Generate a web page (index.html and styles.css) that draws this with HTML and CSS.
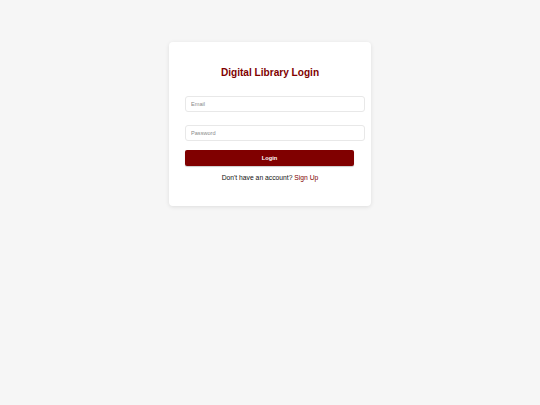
FILE: index.html
```html
<!DOCTYPE html>
<html>
<head>
<meta charset="utf-8">
<link rel="stylesheet" href="styles.css">
</head>
<body>
<div class="page">
  <div class="card">
    <h2 class="title">Digital Library Login</h2>
    <form class="form">
      <input class="field field-email" type="email" placeholder="Email">
      <input class="field field-pass" type="password" placeholder="Password">
      <button class="btn" type="button">Login</button>
    </form>
    <p class="signup">Don't have an account? <a class="link" href="#">Sign Up</a></p>
  </div>
</div>
</body>
</html>
```
FILE: styles.css
```css
html, body {
  margin: 0;
  padding: 0;
}
body {
  background: #f6f6f6;
  font-family: "Liberation Sans", Arial, sans-serif;
  width: 540px;
  height: 405px;
  overflow: hidden;
}
.page {
  display: flex;
  justify-content: center;
  padding-top: 42px;
}
.card {
  width: 202px;
  height: 164px;
  box-sizing: border-box;
  background: #fff;
  border-radius: 4px;
  box-shadow: 0 1px 4px rgba(0, 0, 0, 0.1);
  padding: 17px 16px 0 16px;
}
.title {
  margin: 8px 0 0 0;
  font-size: 10.1px;
  line-height: 12px;
  font-weight: bold;
  color: #800000;
  text-align: center;
}
.form {
  display: flex;
  flex-direction: column;
  margin-top: 17px;
}
.field {
  width: 180px;
  height: 16px;
  box-sizing: border-box;
  border: 1px solid #e8e8e8;
  border-radius: 3px;
  padding: 0 5px;
  font-family: "Liberation Sans", Arial, sans-serif;
  font-size: 5.6px;
  color: #333;
  background: #fff;
  outline: none;
}
.field::placeholder {
  color: #8a8a8a;
}
.field-pass {
  margin-top: 13px;
}
.btn {
  margin-top: 9px;
  width: 169px;
  height: 16px;
  box-sizing: border-box;
  border: none;
  border-radius: 2px;
  background: #800000;
  color: #fff;
  font-family: "Liberation Sans", Arial, sans-serif;
  font-size: 5.7px;
  font-weight: bold;
  padding: 0;
  box-shadow: 0 1px 1px rgba(0,0,0,0.2);
}
.signup {
  margin: 8px 0 0 0;
  font-size: 6.75px;
  line-height: 8px;
  text-align: center;
  color: #111;
}
.link {
  color: #800000;
  text-decoration: none;
}
```
